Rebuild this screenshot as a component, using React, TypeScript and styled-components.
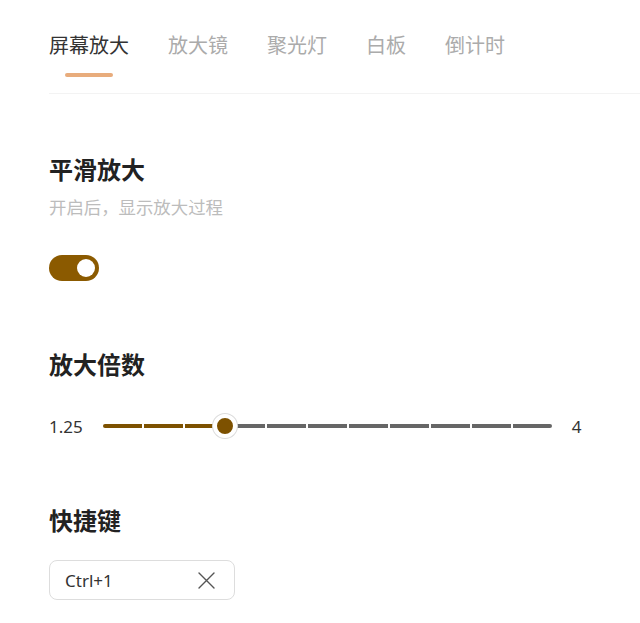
import React from "react";
import styled, { createGlobalStyle } from "styled-components";

const Global = createGlobalStyle`
  html, body { margin: 0; padding: 0; background: #ffffff; }
  body { font-family: "Noto Sans CJK SC", "Noto Sans", sans-serif; }
`;

const Page = styled.div`
  padding: 31px 0 0 49px;
`;

const TabBar = styled.div`
  display: flex;
  gap: 39px;
  border-bottom: 1px solid #f3f3f3;
  padding-bottom: 16px;
`;

const Tab = styled.div<{ $active?: boolean }>`
  display: flex;
  flex-direction: column;
  align-items: center;
  font-size: 20px;
  line-height: 28px;
  color: ${(p) => (p.$active ? "#333333" : "#ababab")};
  &::after {
    content: "";
    display: block;
    width: ${(p) => (p.$active ? "48px" : "0")};
    height: 4px;
    border-radius: 2px;
    margin-top: 14px;
    background: #e8ac7c;
  }
`;

const Section = styled.section<{ $top: number }>`
  margin-top: ${(p) => p.$top}px;
  display: flex;
  flex-direction: column;
  align-items: flex-start;
`;

const Title = styled.h2`
  margin: 0;
  font-size: 24px;
  line-height: 32px;
  font-weight: 700;
  color: #222222;
`;

const Desc = styled.p`
  margin: 10px 0 0;
  font-size: 17.4px;
  line-height: 24px;
  color: #bcbcbc;
`;

const Switch = styled.div<{ $on: boolean }>`
  margin-top: 36px;
  width: 50px;
  height: 26px;
  border-radius: 13px;
  background: ${(p) => (p.$on ? "#8b5a00" : "#cccccc")};
  display: flex;
  align-items: center;
  justify-content: ${(p) => (p.$on ? "flex-end" : "flex-start")};
  padding: 0 4px;
  box-sizing: border-box;
`;

const Knob = styled.div`
  width: 18px;
  height: 18px;
  border-radius: 50%;
  background: #ffffff;
`;

const SliderRow = styled.div`
  margin-top: 34px;
  display: flex;
  align-items: center;
  gap: 20px;
  height: 24px;
  font-family: "Noto Sans", sans-serif;
  font-size: 17px;
  color: #333333;
`;

const Track = styled.div`
  position: relative;
  width: 449px;
  height: 4px;
  display: flex;
  gap: 2px;
`;

const Segment = styled.div<{ $filled: boolean; $first?: boolean; $last?: boolean }>`
  flex: 1;
  height: 4px;
  background: ${(p) => (p.$filled ? "#7d5100" : "#666666")};
  border-radius: ${(p) => (p.$first ? "2px 0 0 2px" : p.$last ? "0 2px 2px 0" : "0")};
`;

const Thumb = styled.div`
  position: absolute;
  top: 50%;
  width: 16px;
  height: 16px;
  border-radius: 50%;
  background: #7d5100;
  border: 4px solid #ffffff;
  box-shadow: 0 0 0 1px #dcdcdc;
  transform: translate(-50%, -50%);
`;

const KeyBox = styled.div`
  margin-top: 24px;
  width: 186px;
  height: 40px;
  box-sizing: border-box;
  border: 1px solid #dddddd;
  border-radius: 8px;
  display: flex;
  align-items: center;
  justify-content: space-between;
  padding: 0 19px 0 15px;
  font-family: "Noto Sans", sans-serif;
  font-size: 17px;
  color: #333333;
`;

const tabs = ["屏幕放大", "放大镜", "聚光灯", "白板", "倒计时"];

export default function App() {
  const steps = 11;
  const value = 3;
  const pct = (value / steps) * 100;
  return (
    <>
      <Global />
      <Page>
        <TabBar>
          {tabs.map((t, i) => (
            <Tab key={t} $active={i === 0}>
              {t}
            </Tab>
          ))}
        </TabBar>

        <Section $top={59}>
          <Title>平滑放大</Title>
          <Desc>开启后，显示放大过程</Desc>
          <Switch $on>
            <Knob />
          </Switch>
        </Section>

        <Section $top={67}>
          <Title>放大倍数</Title>
          <SliderRow>
            <span>1.25</span>
            <Track>
              {Array.from({ length: steps }).map((_, i) => (
                <Segment key={i} $filled={i < value} $first={i === 0} $last={i === steps - 1} />
              ))}
              <Thumb style={{ left: `${pct}%` }} />
            </Track>
            <span>4</span>
          </SliderRow>
        </Section>

        <Section $top={66}>
          <Title>快捷键</Title>
          <KeyBox>
            <span>Ctrl+1</span>
            <svg width="17" height="17" viewBox="0 0 17 17" fill="none">
              <path d="M1 1L16 16M16 1L1 16" stroke="#555555" strokeWidth="1.4" strokeLinecap="round" />
            </svg>
          </KeyBox>
        </Section>
      </Page>
    </>
  );
}
